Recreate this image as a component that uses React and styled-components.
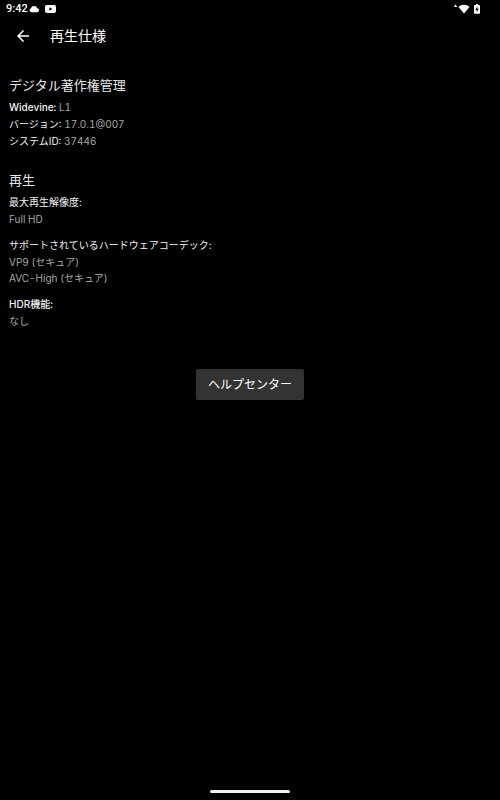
import styled, { createGlobalStyle } from "styled-components"

export default function App() {
  return (
    <>
      <GlobalStyle />
      <Screen>
        <StatusBar>
          <StatusGroup>
            <Clock>9:42</Clock>
            <Notifications>
              <CloudIcon />
              <VideoIcon />
            </Notifications>
          </StatusGroup>
          <SystemGroup>
            <SignalIcon />
            <BatteryIcon />
          </SystemGroup>
        </StatusBar>

        <Header>
          <BackButton type="button" aria-label="戻る">
            <BackIcon />
          </BackButton>
          <Title>再生仕様</Title>
        </Header>

        <Main>
          <Section>
            <SectionTitle>デジタル著作権管理</SectionTitle>
            <InlineSpec>
              <Label $strong>Widevine:</Label> L1
            </InlineSpec>
            <InlineSpec>
              <Label>バージョン:</Label> 17.0.1@007
            </InlineSpec>
            <InlineSpec>
              <Label>システムID:</Label> 37446
            </InlineSpec>
          </Section>

          <Section>
            <SectionTitle>再生</SectionTitle>
            <SpecList>
              <Spec label="最大再生解像度:" values={["Full HD"]} />
              <Spec
                label="サポートされているハードウェアコーデック:"
                values={["VP9 (セキュア)", "AVC-High (セキュア)"]}
              />
              <Spec label="HDR機能:" values={["なし"]} strong />
            </SpecList>
          </Section>

          <HelpButton type="button">ヘルプセンター</HelpButton>
        </Main>

        <GestureBar />
      </Screen>
    </>
  )
}

function Spec({ label, values, strong }) {
  return (
    <div>
      <SpecTerm $strong={strong}>{label}</SpecTerm>
      {values.map((value) => (
        <SpecValue key={value}>{value}</SpecValue>
      ))}
    </div>
  )
}

function CloudIcon() {
  return (
    <svg width="11" height="8" viewBox="0 0 11 8" fill="#fff" aria-hidden="true">
      <path d="M2.200 7.200A2 2 0 0 1 2 3.300 3.200 3.200 0 0 1 8.200 3.300a2 2 0 0 1 .5 3.900z" />
    </svg>
  )
}

function VideoIcon() {
  return (
    <svg width="11" height="8" viewBox="0 0 11 8" aria-hidden="true">
      <rect width="11" height="8" rx="2" fill="#fff" />
      <path d="M4.300 2.200v3.600L7.400 4z" fill="#000" />
    </svg>
  )
}

function SignalIcon() {
  return (
    <svg width="16" height="10" viewBox="0 0 16 10" fill="#fff" aria-hidden="true">
      <path d="M1.600 0.200 3.200 3H0z" />
      <path d="M10 9.500 4.500 3C6 1.400 7.900.7 10 .7s4 .7 5.500 2.300z" />
    </svg>
  )
}

function BatteryIcon() {
  return (
    <svg width="6" height="10" viewBox="0 0 6 10" aria-hidden="true">
      <path d="M2 0h2v1h1.300q.7 0 .7.700v7.300q0 .700-.7.700H.7Q0 9.700 0 9V1.700Q0 1 .7 1H2z" fill="#fff" />
      <path d="M3.400 2.500 1.300 5.800h1.400v2.400l2-3.400H3.400z" fill="#000" />
    </svg>
  )
}

function BackIcon() {
  return (
    <svg width="18" height="18" viewBox="0 0 24 24" fill="#fff" aria-hidden="true">
      <path d="M20 11H7.830l5.590-5.590L12 4l-8 8 8 8 1.410-1.410L7.830 13H20v-2z" />
    </svg>
  )
}

const GlobalStyle = createGlobalStyle`
  * {
    box-sizing: border-box;
  }

  body {
    margin: 0;
    background: #000;
    color: #e6e6e6;
    font-family: Inter, "Noto Sans CJK JP", sans-serif;
    font-variant-numeric: tabular-nums;
  }

  h1, h2, p, dl, dt, dd {
    margin: 0;
  }
`

const Screen = styled.div`
  min-height: 100vh;
  display: flex;
  flex-direction: column;
  background: #000;
`

const StatusBar = styled.div`
  height: 17px;
  padding: 0 20px 0 6px;
  display: flex;
  align-items: center;
  justify-content: space-between;
`

const StatusGroup = styled.div`
  display: flex;
  align-items: center;
  gap: 1px;
`

const Notifications = styled.div`
  display: flex;
  align-items: center;
  gap: 5px;
`

const SystemGroup = styled.div`
  display: flex;
  align-items: center;
  gap: 4px;
`

const Clock = styled.span`
  color: #fff;
  font: 500 11px/16px Roboto, sans-serif;
`

const Header = styled.header`
  height: 38px;
  padding: 0 14px;
  display: flex;
  align-items: center;
  gap: 18px;
`

const BackButton = styled.button`
  padding: 0;
  border: 0;
  background: none;
  display: flex;
  cursor: pointer;
`

const Title = styled.h1`
  color: #fff;
  font-size: 14px;
  font-weight: 400;
  line-height: 20px;
`

const Main = styled.main`
  flex: 1;
  padding: 20px 9px;
  display: flex;
  flex-direction: column;
`

const Section = styled.section`
  margin-bottom: 20px;
`

const SectionTitle = styled.h2`
  padding-bottom: 4px;
  font-size: 13px;
  font-weight: 400;
  line-height: 20px;
`

const InlineSpec = styled.p`
  color: #a8a8a8;
  font-size: 10px;
  line-height: 17px;
`

const Label = styled.span`
  color: #f2f2f2;
  font-weight: ${({ $strong }) => ($strong ? 500 : 400)};
`

const SpecList = styled.dl`
  display: flex;
  flex-direction: column;
  gap: 10px;
`

const SpecTerm = styled.dt`
  color: #f2f2f2;
  font-size: 10px;
  font-weight: ${({ $strong }) => ($strong ? 500 : 400)};
  line-height: 17px;
`

const SpecValue = styled.dd`
  color: #a8a8a8;
  font-size: 10px;
  line-height: 16px;
`

const HelpButton = styled.button`
  align-self: center;
  margin-top: 20px;
  padding: 5px 12px;
  border: 0;
  border-radius: 2px;
  background: #333;
  color: #fff;
  font-family: inherit;
  font-size: 12px;
  font-weight: 400;
  line-height: 21px;
  cursor: pointer;
`

const GestureBar = styled.div`
  align-self: center;
  width: 80px;
  height: 3px;
  margin-bottom: 7px;
  border-radius: 2px;
  background: #f2f2f2;
`
